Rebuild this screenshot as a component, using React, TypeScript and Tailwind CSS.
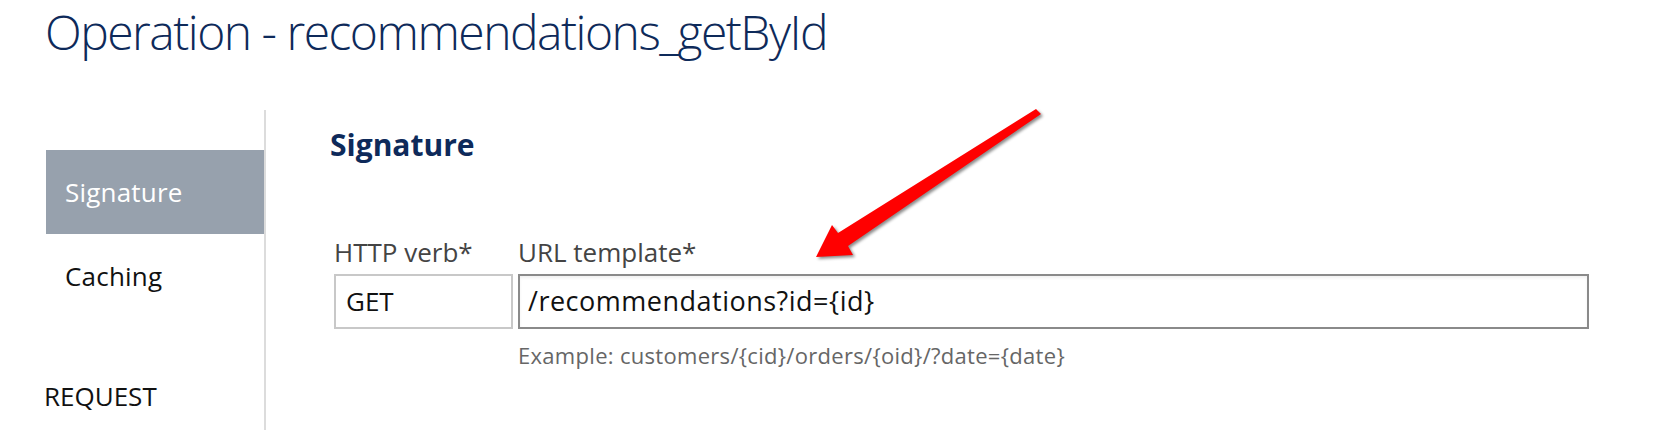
import React from "react";

const FONT = { fontFamily: '"Segoe UI", "Open Sans", "Noto Sans", sans-serif' };

function Arrow() {
  // red callout arrow pointing at the URL template field
  return (
    <svg
      className="absolute left-[800px] top-[100px] drop-shadow-[2px_2px_1.5px_rgba(0,0,0,0.45)]"
      width="260"
      height="170"
      viewBox="800 100 260 170"
    >
      <polygon points="1036,109 1041,114 848,246 853,255 816,257 832,225 838,233" fill="#ff0000" />
    </svg>
  );
}

function SideItem({ label, active }: { label: string; active?: boolean }) {
  return (
    <div
      className={`h-[84px] flex items-center pl-[19px] text-[26px] tracking-[0.2px] ${
        active ? "bg-[#97a1ad] text-white" : "text-[#111]"
      }`}
    >
      {label}
    </div>
  );
}

export default function App() {
  return (
    <div className="relative w-[1654px] h-[430px] overflow-hidden bg-white" style={FONT}>
      <h1 className="pl-[45px] text-[48px] leading-[64px] font-light tracking-[-1.5px] text-[#0e2a5a]">
        Operation - recommendations_getById
      </h1>

      <div className="mt-[46px] flex h-[320px]">
        <aside className="w-[266px] shrink-0 border-r-2 border-[#dcdcdc] pl-[46px] pt-[40px]">
          <SideItem label="Signature" active />
          <SideItem label="Caching" />
          <div className="mt-[63px] -ml-[2px] text-[26px] leading-[30px] text-[#111]">REQUEST</div>
        </aside>

        <main className="flex-1 pl-[64px] pt-[15px]">
          <h2 className="text-[30px] leading-[40px] font-bold text-[#0e2a5a]">Signature</h2>

          <div className="mt-[71px] ml-[4px] grid grid-cols-[179px_1071px] gap-x-[5px]">
            <label className="text-[26px] leading-[32px] text-[#444]">HTTP verb*</label>
            <label className="text-[26px] leading-[32px] text-[#444]">URL template*</label>

            <div className="mt-[6px] h-[55px] flex items-center border-2 border-[#c8c8c8] pl-[10px] text-[26px] text-[#111]">
              GET
            </div>
            <div className="mt-[6px] h-[55px] flex items-center border-2 border-[#8a8a8a] pl-[8px] text-[27px] tracking-[0.5px] text-[#111] shadow-[inset_0_2px_3px_rgba(0,0,0,0.06)]">
              /recommendations?id={"{id}"}
            </div>

            <div />
            <p className="mt-[12px] text-[22px] leading-[28px] tracking-[0.3px] text-[#666]">
              Example: customers/{"{cid}"}/orders/{"{oid}"}/?date={"{date}"}
            </p>
          </div>
        </main>
      </div>

      <Arrow />
    </div>
  );
}
